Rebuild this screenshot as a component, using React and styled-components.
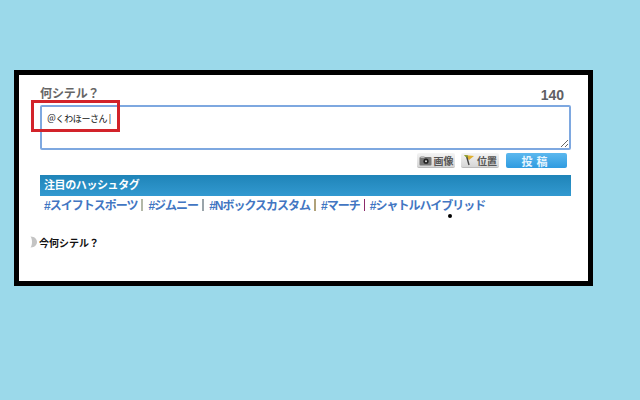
import React from "react";
import styled, { createGlobalStyle } from "styled-components";

const Global = createGlobalStyle`
  html, body { margin: 0; padding: 0; background: #9bd9ea; }
  body { font-family: "Liberation Sans", "Noto Sans CJK JP", sans-serif; }
`;
const Frame = styled.div`
  position: relative; box-sizing: border-box; width: 579px; height: 216px;
  margin: 70px 0 0 14px; border: 5px solid #000; background: #fff;
  padding: 12px 17px 0 21px;
`;
const Header = styled.div`
  display: flex; justify-content: space-between; align-items: flex-start;
  height: 18px; padding: 0 7px 0 0; font-weight: 700; color: #666;
`;
const Title = styled.span`font-size: 12px; line-height: 14px; letter-spacing: -0.1px;`;
const Count = styled.span`font-size: 14px; line-height: 16px; color: #5f6064;`;
const Input = styled.textarea`
  display: block; box-sizing: border-box; width: 100%; height: 45px; margin: 0;
  padding: 5px 5px; border: 2px solid #7ea8e0; border-radius: 2px; outline: none;
  font: 9px "Noto Sans CJK JP", sans-serif; letter-spacing: -0.4px; color: #111; background: #fff;
`;
const Actions = styled.div`
  display: flex; justify-content: flex-end; align-items: center;
  gap: 6px; height: 15px; margin-top: 3px; padding-right: 4px;
`;
const ToolButton = styled.div`
  box-sizing: border-box; display: flex; align-items: center; justify-content: center; gap: 2px;
  width: 38px; height: 15px; border-radius: 2px; background: linear-gradient(#f4f4f4, #d6d6d6);
  border-bottom: 1px solid #bbb; font-size: 10px; font-weight: 700; color: #555;
`;
const Post = styled.div`
  display: flex; align-items: center; justify-content: center; width: 61px; height: 15px;
  margin-left: 1px; border-radius: 2px; background: linear-gradient(#5cb8ee, #2f9be0);
  font-size: 11px; font-weight: 700; letter-spacing: 4px; color: #e8f6ff;
`;
const TagBar = styled.div`
  box-sizing: border-box; display: flex; align-items: center; height: 21px; margin-top: 7px;
  padding: 0 0 4px 4px;
  background: linear-gradient(#1f84b8, #3299d0); color: #fff;
  font-size: 11px; font-weight: 700; letter-spacing: -0.4px;
`;
const Tags = styled.div`
  display: flex; align-items: center; height: 17px; padding-left: 4px;
  font-size: 12px; font-weight: 700; color: #4276c2; letter-spacing: -1px; white-space: nowrap;
`;
const Tag = styled.span``;
const Sep = styled.span`
  width: ${p => p.$w}px; height: 12px; margin: 0 5px 0 4px; background: ${p => p.$c};
`;
const Status = styled.div`
  display: flex; align-items: center; gap: 2px; height: 14px; margin: 22px 0 0 -10px;
  font-size: 10px; font-weight: 700; color: #111;
`;
const Highlight = styled.div`
  position: absolute; left: 12px; top: 25px; width: 89px; height: 32px; box-sizing: border-box;
  border: 3px solid #d2232a;
`;
const Dot = styled.div`
  position: absolute; left: 429px; top: 139px; width: 4px; height: 4px; border-radius: 50%; background: #000;
`;
const Camera = () => (
  <svg width="13" height="11" viewBox="0 0 13 11">
    <rect x="0.5" y="2" width="12" height="8.5" rx="1" fill="#777" />
    <rect x="1.5" y="1" width="4" height="2" fill="#bbb" />
    <circle cx="7" cy="6.2" r="2.6" fill="#222" />
    <circle cx="7" cy="6.2" r="1" fill="#ddd" />
  </svg>
);
const Flag = () => (
  <svg width="12" height="12" viewBox="0 0 12 12">
    <path d="M1 1 L11 2 L6 6 Z" fill="#e0b030" />
    <path d="M3.5 2 L6 11" stroke="#444" strokeWidth="1.4" />
    <path d="M1 1 L5 1.5 L4 4 Z" fill="#7a9a30" />
  </svg>
);
const Crescent = () => (
  <svg width="7" height="12" viewBox="0 0 7 12">
    <path d="M0.5 0.5 C5 0.5 7 3.5 7 6 C7 8.5 5 11.5 0.5 11.5 C2.5 9 2.5 3 0.5 0.5 Z" fill="#c4c4c4" />
  </svg>
);
const tags = [
  ["#スイフトスポーツ", "#b3b8a8", 2],
  ["#ジムニー", "#9aa4aa", 2],
  ["#Nボックスカスタム", "#b0a27a", 2],
  ["#マーチ", "#8c2a6a", 1],
  ["#シャトルハイブリッド"],
];
export default function App() {
  return (
    <>
      <Global />
      <Frame>
        <Header>
          <Title>何シテル？</Title>
          <Count>140</Count>
        </Header>
        <Input readOnly defaultValue="＠くわほーさん |" />
        <Actions>
          <ToolButton><Camera />画像</ToolButton>
          <ToolButton><Flag />位置</ToolButton>
          <Post>投稿</Post>
        </Actions>
        <TagBar>注目のハッシュタグ</TagBar>
        <Tags>
          {tags.map(([t, c, w]) => (
            <React.Fragment key={t}>
              <Tag>{t}</Tag>
              {c && <Sep $c={c} $w={w} />}
            </React.Fragment>
          ))}
        </Tags>
        <Status><Crescent />今何シテル？</Status>
        <Highlight />
        <Dot />
      </Frame>
    </>
  );
}
